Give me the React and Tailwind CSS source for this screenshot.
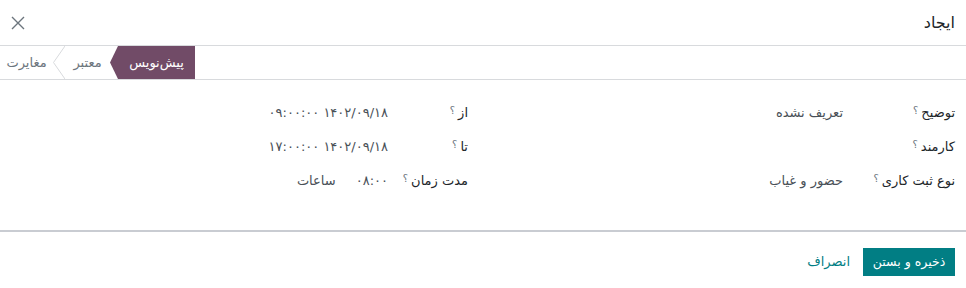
import React from 'react';

const font = { fontFamily: '"DejaVu Sans", "Noto Sans", sans-serif' };

const Q = () => <sup className="text-[10px] text-[#6c757d] mr-[3px] relative -top-[3px]">؟</sup>;

const Field = ({ label, labelW, children }) => (
    <div className="flex items-center h-[34px]">
        <div className={`${labelW} shrink-0 text-[13px] text-[#212529] font-medium`}>{label}<Q /></div>
        <div className="text-[13px] text-[#495057] flex items-center gap-[20px]">{children}</div>
    </div>
);

export default function App() {
    return (
        <div dir="rtl" style={font} className="w-[966px] h-[288px] bg-white flex flex-col overflow-hidden">
            <div className="h-[46px] flex items-center justify-between pr-[11px] pl-[10px] border-b border-[#d8dadd]">
                <h4 className="text-[16px] text-[#212529]">ایجاد</h4>
                <svg width="16" height="16" viewBox="0 0 16 16" className="text-[#6c757d]">
                    <path d="M2 2L14 14M14 2L2 14" stroke="currentColor" strokeWidth="1.4" />
                </svg>
            </div>

            <div className="h-[34px] flex justify-end border-b border-[#d8dadd]">
                <div className="flex items-stretch h-[33px]">
                    <div className="bg-[#714B67] text-white text-[13px] font-medium w-[77px] flex items-center justify-center">پیش‌نویس</div>
                    <svg width="8" height="33" viewBox="0 0 8 33" className="shrink-0">
                        <path d="M8 0L0 16.5L8 33Z" fill="#714B67" />
                    </svg>
                    <div className="w-[45px] text-[13px] text-[#6c757d] flex items-center justify-center">معتبر</div>
                    <svg width="12" height="33" viewBox="0 0 12 33" className="shrink-0">
                        <path d="M12 0L0.5 16.5L12 33" fill="none" stroke="#d8dadd" strokeWidth="1" />
                    </svg>
                    <div className="w-[53px] text-[13px] text-[#6c757d] flex items-center justify-center">مغایرت</div>
                </div>
            </div>

            <div className="flex-1 pt-[16px] pr-[11px] pl-[10px] grid grid-cols-2 gap-x-[29px] content-start">
                <div className="flex flex-col">
                    <Field label="توضیح" labelW="w-[112px]">تعریف نشده</Field>
                    <Field label="کارمند" labelW="w-[112px]"></Field>
                    <Field label="نوع ثبت کاری" labelW="w-[112px]">حضور و غیاب</Field>
                </div>
                <div className="flex flex-col">
                    <Field label="از" labelW="w-[80px]">۱۴۰۲/۰۹/۱۸ ۰۹:۰۰:۰۰</Field>
                    <Field label="تا" labelW="w-[80px]">۱۴۰۲/۰۹/۱۸ ۱۷:۰۰:۰۰</Field>
                    <Field label="مدت زمان" labelW="w-[80px]">
                        <span>۰۸:۰۰</span>
                        <span>ساعات</span>
                    </Field>
                </div>
            </div>

            <div className="h-[58px] border-t-2 border-[#c9ccd2] flex items-center gap-[13px] pr-[11px] pt-[4px]">
                <button className="h-[28px] w-[92px] bg-[#017E84] text-white text-[12.5px] font-medium">ذخیره و بستن</button>
                <button className="text-[13px] text-[#017E84] font-medium">انصراف</button>
            </div>
        </div>
    );
}
